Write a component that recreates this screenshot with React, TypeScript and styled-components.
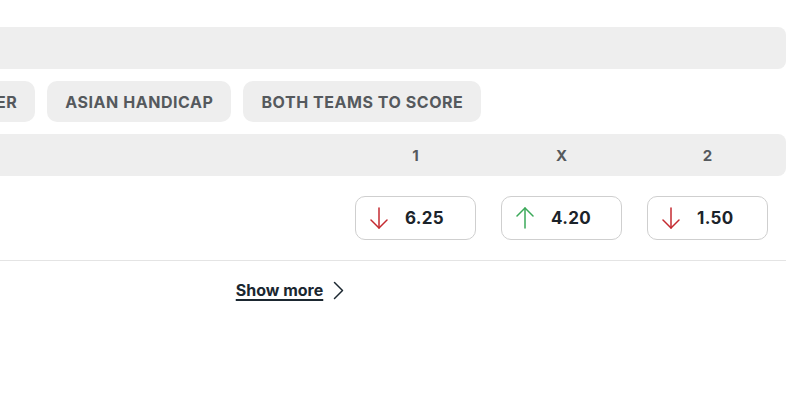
import React from "react";
import styled, { createGlobalStyle } from "styled-components";

const Global = createGlobalStyle`
  html, body { margin: 0; padding: 0; background: #ffffff; }
  body { font-family: Inter, "Noto Sans", "Liberation Sans", sans-serif; overflow: hidden; }
`;

const Page = styled.div`
  width: 800px;
  height: 400px;
  overflow: hidden;
`;

const Content = styled.div`
  margin-left: -206px;
  width: 992px;
  padding-top: 27px;
  display: flex;
  flex-direction: column;
`;

const SearchBar = styled.div`
  height: 42px;
  border-radius: 8px;
  background: #eeeeee;
`;

const Tabs = styled.div<{ $offset: number }>`
  margin-top: 12px;
  display: flex;
  gap: 12px;
  padding-left: ${(p) => p.$offset}px;
`;

const Tab = styled.button`
  height: 41px;
  padding: 0 18px;
  border: none;
  border-radius: 10px;
  background: #eeeeee;
  color: #55595d;
  font-family: inherit;
  font-size: 16px;
  font-weight: 700;
  letter-spacing: 0.55px;
  text-transform: uppercase;
  white-space: nowrap;
`;

const Grid = styled.div`
  display: grid;
  grid-template-columns: 1fr repeat(3, 121px);
  column-gap: 25px;
  padding-right: 18px;
  align-items: center;
`;

const HeaderRow = styled(Grid)`
  margin-top: 12px;
  height: 42px;
  border-radius: 8px;
  background: #eeeeee;
`;

const HeaderLabel = styled.div`
  text-align: center;
  color: #55595d;
  font-size: 15px;
  font-weight: 700;
`;

const MatchRow = styled(Grid)`
  padding-top: 20px;
  padding-bottom: 20px;
  border-bottom: 1px solid #e4e4e4;
`;

const OddButton = styled.button`
  height: 44px;
  box-sizing: border-box;
  border: 1px solid #cfcfcf;
  border-radius: 10px;
  background: #ffffff;
  display: flex;
  align-items: center;
  gap: 17px;
  padding: 0 0 0 14px;
  font-family: inherit;
  font-size: 17px;
  font-weight: 700;
  letter-spacing: 0.3px;
  color: #1b232a;
`;

const Footer = styled.div`
  display: flex;
  justify-content: center;
  padding-top: 19px;
`;

const ShowMore = styled.a`
  display: flex;
  align-items: center;
  gap: 10px;
  color: #1b2730;
  font-size: 16px;
  font-weight: 700;
  line-height: 20px;
  cursor: pointer;
`;

const ShowMoreText = styled.span`
  text-decoration: underline;
  text-decoration-thickness: 2px;
  text-underline-offset: 3px;
`;

const Arrow = ({ up }: { up: boolean }) => (
  <svg width="18" height="22" viewBox="0 0 18 22" fill="none"
    stroke={up ? "#3aa858" : "#c42a30"} strokeWidth="1.5" strokeLinecap="round" strokeLinejoin="round">
    {up ? (
      <>
        <path d="M9 21V1" />
        <path d="M1 9l8-8 8 8" />
      </>
    ) : (
      <>
        <path d="M9 1v20" />
        <path d="M1 13l8 8 8-8" />
      </>
    )}
  </svg>
);

const Chevron = () => (
  <svg width="11" height="19" viewBox="0 0 11 19" fill="none" stroke="#1b2730" strokeWidth="1.5" strokeLinecap="round" strokeLinejoin="round">
    <path d="M1.5 1.5l8 8-8 8" />
  </svg>
);

const odds = [
  { value: "6.25", up: false },
  { value: "4.20", up: true },
  { value: "1.50", up: false },
];

export default function App() {
  return (
    <Page>
      <Global />
      <Content>
        <SearchBar />
        <Tabs $offset={94}>
          <Tab>Over/Under</Tab>
          <Tab>Asian Handicap</Tab>
          <Tab>Both Teams To Score</Tab>
        </Tabs>
        <HeaderRow>
          <div />
          <HeaderLabel>1</HeaderLabel>
          <HeaderLabel>X</HeaderLabel>
          <HeaderLabel>2</HeaderLabel>
        </HeaderRow>
        <MatchRow>
          <div />
          {odds.map((o) => (
            <OddButton key={o.value}>
              <Arrow up={o.up} />
              {o.value}
            </OddButton>
          ))}
        </MatchRow>
        <Footer>
          <ShowMore>
            <ShowMoreText>Show more</ShowMoreText>
            <Chevron />
          </ShowMore>
        </Footer>
      </Content>
    </Page>
  );
}
